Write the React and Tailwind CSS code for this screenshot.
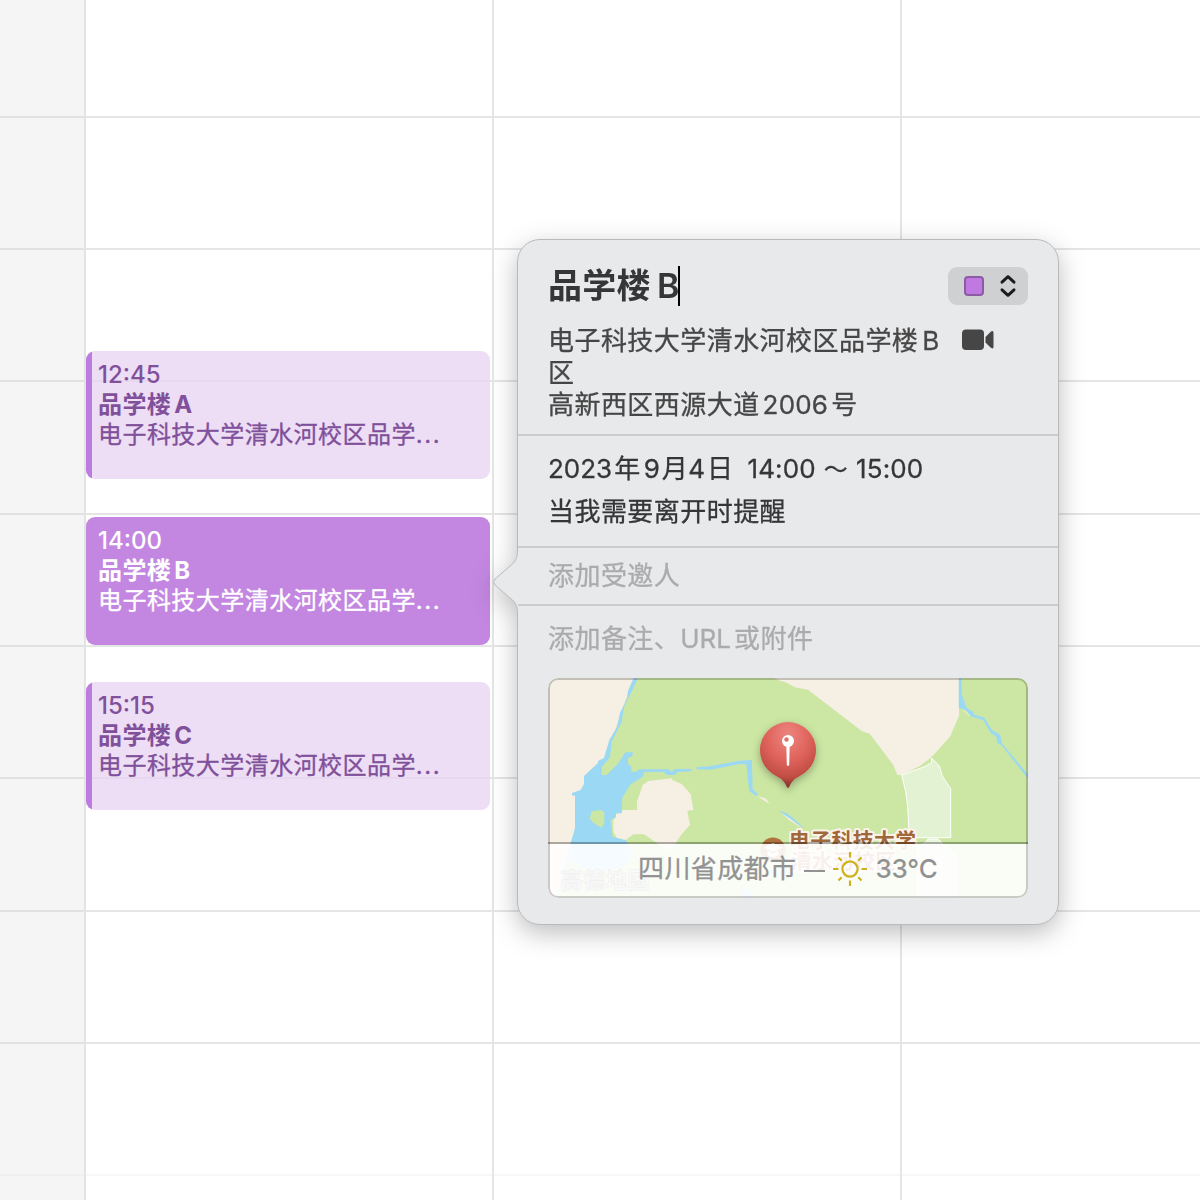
import React from "react";

const HOURS = ["h-[118px]", "h-[132px]", "h-[132px]", "h-[133px]", "h-[132px]", "h-[132px]", "h-[133px]", "h-[132px]"];

function TimeGrid() {
  return (
    <div className="flex h-[1200px] w-[1200px]">
      <div className="w-[86px] shrink-0 border-r-2 border-[#e3e3e3] bg-[#f5f5f5]">
        {HOURS.map((h, i) => (
          <div key={i} className={`${h} border-b-2 border-[#e1e1e1]`} />
        ))}
        <div className="h-[132px] border-b-2 border-[#f0f0f0]" />
      </div>
      {[0, 1, 2].map((c) => (
        <div
          key={c}
          className={c === 2 ? "w-[298px] shrink-0" : "w-[408px] shrink-0 border-r-2 border-[#e5e5e5]"}
        >
          {HOURS.map((h, i) => (
            <div key={i} className={`${h} border-b-2 border-[#e5e5e5]`} />
          ))}
          <div className="h-[132px] border-b-2 border-[#f7f7f7]" />
        </div>
      ))}
    </div>
  );
}

function CalendarEvent({ place, time, letter, selected }) {
  return (
    <div
      className={`absolute left-[86px] flex h-[128px] w-[404px] overflow-hidden rounded-[9px] ${place} ${
        selected ? "bg-[#c387e1] text-white" : "bg-[#e7d2f1]/75 text-[#80509a]"
      }`}
    >
      <div className={`w-[6px] shrink-0 ${selected ? "" : "bg-[#bd7be0]"}`} />
      <div className="flex flex-col pt-[9px] pl-[6px] text-[24px] leading-[30px] whitespace-nowrap">
        <div className="font-medium">{time}</div>
        <div className="font-bold tracking-[0.4px]">
          品学楼<span className="ml-[3px]">{letter}</span>
        </div>
        <div className="tracking-[0.45px] [-webkit-text-stroke:0.3px_currentColor]">
          电子科技大学清水河校区品学<span className="tracking-[1.5px]">...</span>
        </div>
      </div>
    </div>
  );
}

function MapView() {
  return (
    <svg className="absolute inset-0 h-[220px] w-[480px]" viewBox="548 678 480 220">
      <defs>
        <radialGradient id="pinFill" cx="0.5" cy="0.2" r="0.75">
          <stop offset="0" stopColor="#ec8580" />
          <stop offset="0.5" stopColor="#e0645c" />
          <stop offset="0.85" stopColor="#c14e44" />
          <stop offset="1" stopColor="#8f3a31" />
        </radialGradient>
        <filter id="pinShadow" x="-50%" y="-50%" width="200%" height="200%">
          <feDropShadow dx="0" dy="3" stdDeviation="4" floodColor="#000" floodOpacity="0.3" />
        </filter>
      </defs>
      <rect x="548" y="678" width="480" height="220" fill="#cce7a3" />
      <path fill="#f5efe4" d="M548 678H635L628 694 620 716 606 758 590 775 582 792 578 828 571 843 557 898H548Z" />
      <path
        fill="#9bd8f4"
        d="M633.7 678 628 690.7 627.3 698 620 713 617 727 609.3 740 604 758 598 761V763L584 776V784L580.7 790 572 793V795.5H575V828L570.7 843 556 898 559 890 565 870 570 860 583 868 603 870 623 867 631 857 630 847 625.7 840 616.7 837.7 612.7 836.7 610.7 820 616 816.7V813.3H621.7L622.3 798 630 785 642.7 776.7 644 772H664L666.7 775H674.7L677.3 772 690.7 771.3 692 769H675L671.7 771.7 668 769.3H639.3L636 771.7H631.3V766.7L628 764V758L631.7 756.7 633.3 752.3H625.3L618.3 763.3 606.7 775H601.3L602 766.7 610 757.3 611.7 741.7 621.7 721.7 624 706.7 630 695 638 678Z"
      />
      <path fill="#cce7a3" d="M591.7 811.3 601.7 810 604.3 812.5V823L601.3 827.7 593.3 822.7 589.7 818.3ZM610.7 820 613.5 819V832L616.7 837.7 612.7 836.7Z" />
      <path
        fill="#f5efe4"
        d="M671.7 778.3 648.3 781 642.7 785 637 801.7V810H622.3L621.7 813.3 616 814V817L613.3 820V831.7L616.7 837.7 625.7 840 633.3 834.3H644L655 841.7 670 851.7 676.7 841.7 681.7 834 690 825 687.3 810.7 693.3 810 690.7 794 681.7 784 672.3 780Z"
      />
      <path
        fill="#9bd8f4"
        d="M696.7 767 710 766.2 739.3 760.7 752 760 752.6 789 758 794 756 796 749.300 791 746.200 764H740L711.7 769.500H696.7ZM779 810.5 788 814 806 829.5 788 818ZM741 887 754 893V898H741Z"
      />
      <path fill="#f5efe4" d="M757 796 766 798.5 769.5 804ZM781 813 790 818.5 804 829.5 790 820.5Z" />
      <path
        fill="#f5efe4"
        d="M774 678 780 680.7 785 682 795 687.3 808.3 690 861.7 731 870 734 893.3 765 897.3 775H901.7L920 766 930.7 757.7 938 750 943.3 744 950 736.7 959 716V678Z"
      />
      <path
        fill="#9bd8f4"
        stroke="#9bd8f4"
        strokeWidth="0.500"
        d="M959 678H961L961.7 695 966.7 708.3 972.7 711.7 974.3 715 984 717.7 991.7 730 1000 735 1001.7 743.3 1018.3 763.3 1028 775V778.3L1013.3 760 1001.7 745 997.3 742.7 996.7 736.7 990.7 732.7 983.3 720 970.7 716 966.7 710.7 959 707.3Z"
      />
      <path fill="none" stroke="#f5efe4" strokeWidth="1" d="M963 709.500 970 716" />
      <path
        fill="#e3f2d2"
        stroke="#fff"
        strokeWidth="1"
        d="M901.7 775 925 766.5 931.5 762.5V758L939.3 766 942.3 776 950.7 789V837.7H909.3L907.7 806.7 905.7 791.7Z"
      />
      <path fill="#eaf5dd" stroke="#fff" strokeWidth="1" d="M917 898V846L925 843 928 839H938L943 844 957 857V898Z" />

      <circle cx="773" cy="850" r="12.5" fill="#b0733f" />
      <path fill="#fff" d="M773 843 782.5 847.5 773 852 763.5 847.5ZM767.5 850.8 773 853.5 778.5 850.8V855Q773 859 767.5 855Z" />
      <g
        fontFamily="Inter, 'Noto Sans CJK SC', sans-serif"
        fontSize="20.8"
        fontWeight="700"
        fill="#a0673a"
        stroke="#fbf3ea"
        strokeWidth="4"
        strokeLinejoin="round"
        paintOrder="stroke"
      >
        <text x="789" y="848" textLength="127">电子科技大学</text>
        <text x="791" y="868.5" textLength="105" fill="#b9655a">清水河校区</text>
      </g>
      <text
        x="560.5"
        y="888"
        textLength="89"
        fontFamily="'Noto Sans CJK SC', sans-serif"
        fontSize="22"
        fontWeight="700"
        fill="#d8d8da"
        stroke="#77777c"
        strokeWidth="0.9"
      >
        高德地图
      </text>

      <g>
        <path
          filter="url(#pinShadow)"
          fill="url(#pinFill)"
          d="M788 722A28 28 0 0 1 816 750C816 763 808 772 799 776.500C793 779.500 791 783 789.200 787Q788 789 786.800 787C785 783 783 779.500 777 776.500C768 772 760 763 760 750A28 28 0 0 1 788 722Z"
        />
        <path fill="#fff" d="M786.300 744H789.700L789.200 765Q788 767 786.800 765Z" />
        <circle cx="788" cy="741" r="6" fill="#fff" />
        <circle cx="786.500" cy="739.500" r="2.200" fill="#e0706a" />
      </g>
    </svg>
  );
}

function SunIcon() {
  return (
    <svg className="h-[36px] w-[36px]" viewBox="-18 -18 36 36" fill="none" stroke="#cfb11c" strokeWidth="2.200">
      <circle r="7.600" />
      <path d="M0-17V-11.500M0 17V11.500M-17 0H-11.500M17 0H11.500M-11.500-11.500-8.300-8.300M11.500 11.500 8.300 8.300M-11.500 11.500-8.300 8.300M11.500-11.500 8.300-8.300" />
    </svg>
  );
}

function MapCard() {
  return (
    <div className="relative flex h-[220px] w-[480px] flex-col justify-end overflow-hidden rounded-[10px]">
      <MapView />
      <div className="relative flex h-[56px] items-center border-t-2 border-black/30 bg-white/90 bg-clip-padding pb-[6px] pl-[90px] text-[26px] font-medium whitespace-nowrap text-[#929292]">
        <span className="font-normal tracking-[0.4px] [-webkit-text-stroke:0.3px_currentColor]">四川省成都市</span>
        <span className="mx-[8px] mt-[6px] h-[2px] w-[21px] shrink-0 bg-[#929292]" />
        <span className="mt-[2px] -ml-[1px]">
          <SunIcon />
        </span>
        <span className="ml-[7px] tracking-[-0.2px]">33°C</span>
      </div>
      <div className="absolute inset-0 rounded-[10px] border-2 border-black/20" />
    </div>
  );
}

function Popover() {
  return (
    <div className="absolute top-[239px] left-[517px] h-[686px] w-[542px]">
      <div className="absolute inset-0 [filter:drop-shadow(0_8px_13px_rgba(0,0,0,0.26))]">
        <div className="absolute inset-0 rounded-[23px] border border-[#b9babb] bg-[#e8e9eb]" />
        <svg className="absolute top-[308px] -left-[25px] h-[70px] w-[28px]" viewBox="492 547 28 70">
          <path
            fill="#e8e9eb"
            d="M520 550H517.500C517.500 556 516.500 560 512.500 564L495 579Q492 582 495 585L512.500 600C516.500 604 517.500 608 517.500 614H520Z"
          />
          <path
            fill="none"
            stroke="#b9babb"
            d="M517.500 550C517.500 556 516.500 560 512.500 564L495 579Q492 582 495 585L512.500 600C516.500 604 517.500 608 517.500 614"
          />
        </svg>
      </div>

      <div className="relative m-px flex w-[540px] flex-col text-[26px] whitespace-nowrap text-[#464646] [-webkit-text-stroke:0.3px_currentColor]">
        <div className="flex h-[194px] flex-col pt-[26px] pl-[30px]">
          <div className="flex h-[40px] w-[480px] items-center justify-between">
            <div className="flex items-center text-[34px] leading-[40px] font-semibold text-[#353637] [-webkit-text-stroke:0]">
              <span className="tracking-[0.3px]">品学楼</span>
              <span className="ml-[6px] font-semibold">B</span>
              <span className="-ml-px h-[40px] w-[2px] bg-black" />
            </div>
            <div className="flex h-[38px] w-[80px] items-center rounded-[9px] bg-[#cfd0d2] pl-[16px]">
              <span className="h-[20px] w-[20px] rounded-[4px] border-2 border-[#8d5ba5] bg-[#bf79e1]" />
              <svg
                className="ml-[14px] h-[24px] w-[20px]"
                viewBox="-1 -1 20 24"
                fill="none"
                stroke="#1c1c1d"
                strokeWidth="3"
                strokeLinecap="round"
                strokeLinejoin="round"
              >
                <path d="M3 7.200 9 1.700 15 7.200M3 14.800 9 20.300 15 14.800" />
              </svg>
            </div>
          </div>
          <div className="mt-[19px] flex">
            <div className="w-[414px] leading-[32px] tracking-[0.45px]">
              <div>
                电子科技大学清水河校区品学楼<span className="ml-[4px]">B</span>
              </div>
              <div>区</div>
              <div>
                高新西区西源大道<span className="mx-[3px] tracking-[0.2px]">2006</span>号
              </div>
            </div>
            <svg className="mt-[4px] h-[22px] w-[32px]" viewBox="0 0 32 22" fill="#464646">
              <rect x="0" y="0.500" width="22" height="20.500" rx="4" />
              <path d="M23.500 8 28 3.500Q31.500 0.500 31.500 4V17.500Q31.500 21 28 18L23.500 13.500Z" />
            </svg>
          </div>
        </div>
        <div className="h-[2px] bg-[#cbccce]" />
        <div className="flex h-[110px] flex-col pt-[12px] pl-[30px] leading-[42px] tracking-[0.45px] text-[#353637]">
          <div>
            <span className="tracking-normal">2023</span>
            <span className="ml-[2px]">年</span>
            <span className="mr-[2px] ml-[3px] tracking-normal">9</span>月
            <span className="mr-[2px] tracking-normal">4</span>日
            <span className="ml-[14px] tracking-[0.1px]">14:00</span>
            <span className="mx-[8px] text-[24px]">～</span>
            <span className="tracking-[0.1px]">15:00</span>
          </div>
          <div className="mt-px -translate-y-px">当我需要离开时提醒</div>
        </div>
        <div className="h-[2px] bg-[#cbccce]" />
        <div className="flex h-[56px] items-center pb-[2px] pl-[30px] tracking-[0.45px] text-[#ababad]">添加受邀人</div>
        <div className="h-[2px] bg-[#cbccce]" />
        <div className="flex flex-col pt-[12px] pl-[30px] leading-[42px] tracking-[0.45px] text-[#ababad]">
          <div>
            添加备注、<span className="mr-[3px] tracking-normal">URL</span>或附件
          </div>
          <div className="mt-[18px] leading-normal tracking-normal [-webkit-text-stroke:0]">
            <MapCard />
          </div>
        </div>
      </div>
    </div>
  );
}

export default function App() {
  return (
    <div className="relative h-[1200px] w-[1200px] overflow-hidden bg-white font-[Inter,'Noto_Sans_CJK_SC',sans-serif]">
      <TimeGrid />
      <CalendarEvent place="top-[351px]" time="12:45" letter="A" />
      <CalendarEvent place="top-[517px]" time="14:00" letter="B" selected />
      <CalendarEvent place="top-[682px]" time="15:15" letter="C" />
      <Popover />
    </div>
  );
}
